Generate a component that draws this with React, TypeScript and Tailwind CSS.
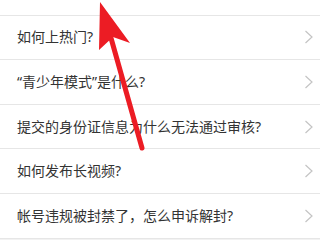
const questions = [
  '如何申请开通直播?',
  '如何上热门?',
  '“青少年模式”是什么?',
  '提交的身份证信息为什么无法通过审核?',
  '如何发布长视频?',
  '帐号违规被封禁了，怎么申诉解封?',
]

function Chevron() {
  return (
    <svg className="w-[10px] h-[14px] shrink-0" viewBox="0 0 10 14" fill="none">
      <path d="M1.5 1 L8 7 L1.5 13" stroke="#c4c4c4" strokeWidth={1.2} />
    </svg>
  )
}

export default function App() {
  return (
    <div
      className="relative w-[320px] h-[240px] overflow-hidden bg-[#f2f2f2]"
      style={{ fontFamily: '"Noto Sans", "Noto Sans CJK SC", sans-serif' }}
    >
      <div className="flex flex-col -mt-[29px] bg-white">
        {questions.map((q, i) => (
          <div
            key={q}
            className={`flex items-center justify-between h-[44.6px] pl-[17px] pr-[6px] border-b border-[#e6e6e6] ${
              i === 0 ? 'pb-[7px]' : ''
            }`}
          >
            <span className="text-[14px] leading-none text-[#333333]">{q}</span>
            <Chevron />
          </div>
        ))}
      </div>

      {/* red arrow pointing up */}
      <svg className="absolute inset-0 w-[320px] h-[240px]" viewBox="0 0 320 240">
        <line x1="142" y1="148" x2="111" y2="38" stroke="#ec1c24" strokeWidth={5} strokeLinecap="round" />
        <polygon points="100,2 130,43 113,37 99,50" fill="#ec1c24" />
      </svg>
    </div>
  )
}
